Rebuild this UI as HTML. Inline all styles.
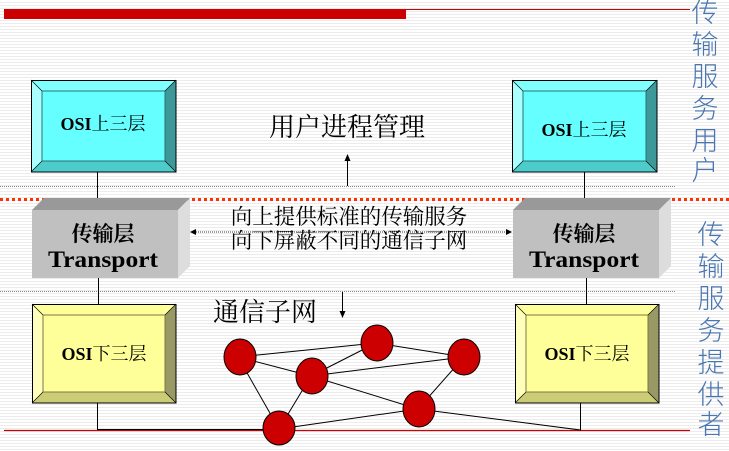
<!DOCTYPE html>
<html><head><meta charset="utf-8"><style>
html,body{margin:0;padding:0;}
body{width:729px;height:451px;overflow:hidden;background:repeating-linear-gradient(to bottom,#fff 0,#fff 2px,#ececec 2px,#ececec 3px);}
svg{position:absolute;left:0;top:0;}
.cj{font-family:"Liberation Serif","Noto Serif CJK SC",serif;}
</style></head><body>
<svg width="729" height="451" viewBox="0 0 729 451" xmlns="http://www.w3.org/2000/svg">
<rect x="4" y="9" width="402" height="10" fill="#cc0000"/>
<line x1="406" y1="9.5" x2="690" y2="9.5" stroke="#cc0000" stroke-width="1"/>
<line x1="4" y1="430.5" x2="690" y2="430.5" stroke="#cc0000" stroke-width="1.2"/>
<line x1="0" y1="186.5" x2="676" y2="186.5" stroke="#888" stroke-width="1" stroke-dasharray="1,1"/>
<line x1="0" y1="291.5" x2="676" y2="291.5" stroke="#888" stroke-width="1" stroke-dasharray="1,1"/>

<line x1="97.5" y1="172" x2="97.5" y2="210" stroke="#000"/>
<line x1="584.5" y1="172" x2="584.5" y2="210" stroke="#000"/>
<line x1="98.5" y1="277" x2="98.5" y2="304" stroke="#000"/>
<line x1="586.5" y1="277" x2="586.5" y2="304" stroke="#000"/>
<polyline points="97.5,403 97.5,429.5 275,429.5" fill="none" stroke="#000"/>
<polyline points="580.5,403 580.5,430 418,409" fill="none" stroke="#000"/>

<g>
<rect x="31" y="80" width="145" height="92" fill="#66ffff"/>
<polygon points="31,80 176,80 165,91 42,91" fill="#80ffff"/>
<polygon points="31,80 42,91 42,161 31,172" fill="#aaffff"/>
<polygon points="176,80 176,172 165,161 165,91" fill="#3d9999"/>
<polygon points="31,172 176,172 165,161 42,161" fill="#4dcccc"/>
<rect x="42" y="91" width="123" height="70" fill="#66ffff" stroke="#2a7070" stroke-width="1"/>
<rect x="31.5" y="80.5" width="144.5" height="91.5" fill="none" stroke="#000"/>
<line x1="31" y1="80" x2="42" y2="91" stroke="#000" stroke-width=".6"/><line x1="176" y1="80" x2="165" y2="91" stroke="#000" stroke-width=".6"/><line x1="31" y1="172" x2="42" y2="161" stroke="#000" stroke-width=".6"/><line x1="176" y1="172" x2="165" y2="161" stroke="#000" stroke-width=".6"/>
<text x="103" y="130" text-anchor="middle" class="cj" font-size="18" font-weight="bold">OSI<tspan font-weight="normal">上三层</tspan></text>
</g>
<g transform="translate(481,0)">
<rect x="31" y="80" width="145" height="92" fill="#66ffff"/>
<polygon points="31,80 176,80 165,91 42,91" fill="#80ffff"/>
<polygon points="31,80 42,91 42,161 31,172" fill="#aaffff"/>
<polygon points="176,80 176,172 165,161 165,91" fill="#3d9999"/>
<polygon points="31,172 176,172 165,161 42,161" fill="#4dcccc"/>
<rect x="42" y="91" width="123" height="70" fill="#66ffff" stroke="#2a7070" stroke-width="1"/>
<rect x="31.5" y="80.5" width="144.5" height="91.5" fill="none" stroke="#000"/>
<line x1="31" y1="80" x2="42" y2="91" stroke="#000" stroke-width=".6"/><line x1="176" y1="80" x2="165" y2="91" stroke="#000" stroke-width=".6"/><line x1="31" y1="172" x2="42" y2="161" stroke="#000" stroke-width=".6"/><line x1="176" y1="172" x2="165" y2="161" stroke="#000" stroke-width=".6"/>
<text x="103" y="136" text-anchor="middle" class="cj" font-size="18" font-weight="bold">OSI<tspan font-weight="normal">上三层</tspan></text>
</g>

<line x1="0" y1="199.5" x2="729" y2="199.5" stroke="#ff3300" stroke-width="3" stroke-dasharray="3,3"/>

<g>
<polygon points="32,210 44,198 190,198 178,210" fill="#999"/>
<polygon points="178,210 190,198 190,266 178,278" fill="#ddd"/>
<rect x="32" y="210" width="146" height="68" fill="#c0c0c0"/>
<text x="103" y="241" text-anchor="middle" class="cj" font-size="21" font-weight="bold">传输层</text>
<text x="103" y="267" text-anchor="middle" class="cj" font-size="23" font-weight="bold" textLength="110" lengthAdjust="spacingAndGlyphs">Transport</text>
</g>
<g transform="translate(481,0)">
<polygon points="32,210 44,198 190,198 178,210" fill="#999"/>
<polygon points="178,210 190,198 190,266 178,278" fill="#ddd"/>
<rect x="32" y="210" width="146" height="68" fill="#c0c0c0"/>
<text x="103" y="241" text-anchor="middle" class="cj" font-size="21" font-weight="bold">传输层</text>
<text x="103" y="267" text-anchor="middle" class="cj" font-size="23" font-weight="bold" textLength="110" lengthAdjust="spacingAndGlyphs">Transport</text>
</g>

<line x1="194" y1="232" x2="508" y2="232" stroke="#333" stroke-dasharray="1,1"/>
<polygon points="190,232 196,229 196,235" fill="#000"/>
<polygon points="512,232 506,229 506,235" fill="#000"/>
<text x="349" y="224" text-anchor="middle" class="cj" font-size="21.5">向上提供标准的传输服务</text>
<text x="349" y="248" text-anchor="middle" class="cj" font-size="21.5">向下屏蔽不同的通信子网</text>

<text x="347" y="136" text-anchor="middle" class="cj" font-size="26">用户进程管理</text>
<line x1="347.5" y1="160" x2="347.5" y2="186" stroke="#000"/>
<polygon points="347.5,154 344.5,161 350.5,161" fill="#000"/>
<text x="265" y="321" text-anchor="middle" class="cj" font-size="26">通信子网</text>
<line x1="342.5" y1="292" x2="342.5" y2="312" stroke="#000"/>
<polygon points="342.5,318 339.5,311 345.5,311" fill="#000"/>

<g>
<rect x="32" y="304" width="144" height="99" fill="#ffff99"/>
<polygon points="32,304 176,304 165,315 43,315" fill="#ffff99"/>
<polygon points="32,304 43,315 43,392 32,403" fill="#ffffbb"/>
<polygon points="176,304 176,403 165,392 165,315" fill="#999966"/>
<polygon points="32,403 176,403 165,392 43,392" fill="#cccc77"/>
<rect x="43" y="315" width="122" height="77" fill="#ffff99" stroke="#7a7a44" stroke-width="1"/>
<rect x="32.5" y="304.5" width="143.5" height="98.5" fill="none" stroke="#000"/>
<line x1="32" y1="304" x2="43" y2="315" stroke="#000" stroke-width=".6"/><line x1="176" y1="304" x2="165" y2="315" stroke="#000" stroke-width=".6"/><line x1="32" y1="403" x2="43" y2="392" stroke="#000" stroke-width=".6"/><line x1="176" y1="403" x2="165" y2="392" stroke="#000" stroke-width=".6"/>
<text x="104" y="360" text-anchor="middle" class="cj" font-size="18" font-weight="bold">OSI<tspan font-weight="normal">下三层</tspan></text>
</g>
<g transform="translate(483,0)">
<rect x="32" y="304" width="144" height="99" fill="#ffff99"/>
<polygon points="32,304 176,304 165,315 43,315" fill="#ffff99"/>
<polygon points="32,304 43,315 43,392 32,403" fill="#ffffbb"/>
<polygon points="176,304 176,403 165,392 165,315" fill="#999966"/>
<polygon points="32,403 176,403 165,392 43,392" fill="#cccc77"/>
<rect x="43" y="315" width="122" height="77" fill="#ffff99" stroke="#7a7a44" stroke-width="1"/>
<rect x="32.5" y="304.5" width="143.5" height="98.5" fill="none" stroke="#000"/>
<line x1="32" y1="304" x2="43" y2="315" stroke="#000" stroke-width=".6"/><line x1="176" y1="304" x2="165" y2="315" stroke="#000" stroke-width=".6"/><line x1="32" y1="403" x2="43" y2="392" stroke="#000" stroke-width=".6"/><line x1="176" y1="403" x2="165" y2="392" stroke="#000" stroke-width=".6"/>
<text x="104" y="360" text-anchor="middle" class="cj" font-size="18" font-weight="bold">OSI<tspan font-weight="normal">下三层</tspan></text>
</g>

<g stroke="#000" stroke-width="1">
<line x1="238" y1="357" x2="376" y2="343"/>
<line x1="376" y1="343" x2="464" y2="357"/>
<line x1="238" y1="357" x2="311" y2="376"/>
<line x1="311" y1="376" x2="376" y2="343"/>
<line x1="311" y1="376" x2="464" y2="357"/>
<line x1="311" y1="376" x2="418" y2="409"/>
<line x1="418" y1="409" x2="464" y2="357"/>
<line x1="238" y1="357" x2="279" y2="429"/>
<line x1="311" y1="376" x2="279" y2="429"/>
<line x1="279" y1="429" x2="418" y2="409"/>
</g>
<g fill="#cc0000" stroke="#000" stroke-width="1">
<ellipse cx="240" cy="357" rx="16" ry="18"/>
<ellipse cx="377" cy="343" rx="16" ry="18"/>
<ellipse cx="464" cy="357" rx="16" ry="18"/>
<ellipse cx="312" cy="376" rx="16" ry="18"/>
<ellipse cx="419" cy="409" rx="16" ry="18"/>
<ellipse cx="279" cy="428" rx="16" ry="17"/>
</g>

<g font-size="27" fill="#4a76b0" text-anchor="middle" style="font-family:'Noto Sans CJK SC',sans-serif;font-weight:300">
<text x="705" y="22">传</text><text x="705" y="54">输</text><text x="705" y="86">服</text><text x="705" y="118">务</text><text x="705" y="150">用</text><text x="705" y="180">户</text>
<text x="711" y="244">传</text><text x="711" y="276">输</text><text x="711" y="308">服</text><text x="711" y="340">务</text><text x="711" y="372">提</text><text x="711" y="404">供</text><text x="711" y="434">者</text>
</g>
</svg>
</body></html>
